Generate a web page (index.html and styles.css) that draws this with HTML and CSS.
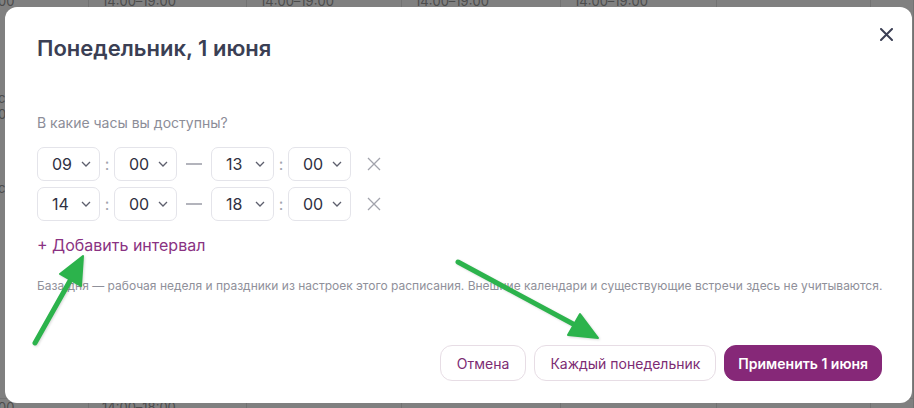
FILE: index.html
```html
<!DOCTYPE html>
<html lang="ru">
<head>
    <meta charset="UTF-8">
    <meta name="viewport" content="width=device-width, initial-scale=1.0">
    <title>Понедельник, 1 июня</title>
    <link rel="stylesheet" href="styles.css">
</head>
<body>
    <!-- schedule table behind the dimmed overlay -->
    <div class="backdrop">
        <div class="bg-cell first">00</div>
        <div class="bg-cell">14:00–19:00</div>
        <div class="bg-cell">14:00–19:00</div>
        <div class="bg-cell">14:00–19:00</div>
        <div class="bg-cell">14:00–19:00</div>
        <div class="bg-cell"></div>
        <div class="bg-cell"></div>

        <div class="bg-cell first">со<br>0</div>
        <div class="bg-cell"></div>
        <div class="bg-cell"></div>
        <div class="bg-cell"></div>
        <div class="bg-cell"></div>
        <div class="bg-cell"></div>
        <div class="bg-cell"></div>

        <div class="bg-cell first">со</div>
        <div class="bg-cell"></div>
        <div class="bg-cell"></div>
        <div class="bg-cell"></div>
        <div class="bg-cell"></div>
        <div class="bg-cell"></div>
        <div class="bg-cell"></div>

        <div class="bg-cell first">00</div>
        <div class="bg-cell">14:00–18:00</div>
        <div class="bg-cell"></div>
        <div class="bg-cell"></div>
        <div class="bg-cell"></div>
        <div class="bg-cell"></div>
        <div class="bg-cell"></div>
    </div>

    <div class="modal">
        <button class="close-btn" aria-label="Закрыть">
            <svg width="13" height="13" viewBox="0 0 13 13">
                <path d="M1 1L12 12M12 1L1 12" stroke="currentColor" stroke-width="2" stroke-linecap="round"/>
            </svg>
        </button>

        <h2 class="title">Понедельник, 1 июня</h2>

        <p class="question">В какие часы вы доступны?</p>

        <div class="intervals">
            <div class="interval">
                <div class="select"><span>09</span><svg class="chev" width="10" height="6" viewBox="0 0 10 6"><path d="M1 1L5 5L9 1" fill="none" stroke="currentColor" stroke-width="1.3"/></svg></div>
                <span class="colon">:</span>
                <div class="select"><span>00</span><svg class="chev" width="10" height="6" viewBox="0 0 10 6"><path d="M1 1L5 5L9 1" fill="none" stroke="currentColor" stroke-width="1.3"/></svg></div>
                <span class="dash"></span>
                <div class="select"><span>13</span><svg class="chev" width="10" height="6" viewBox="0 0 10 6"><path d="M1 1L5 5L9 1" fill="none" stroke="currentColor" stroke-width="1.3"/></svg></div>
                <span class="colon">:</span>
                <div class="select"><span>00</span><svg class="chev" width="10" height="6" viewBox="0 0 10 6"><path d="M1 1L5 5L9 1" fill="none" stroke="currentColor" stroke-width="1.3"/></svg></div>
                <button class="remove-btn" aria-label="Удалить">
                    <svg width="14" height="14" viewBox="0 0 14 14"><path d="M1 1L13 13M13 1L1 13" stroke="currentColor" stroke-width="1.3"/></svg>
                </button>
            </div>
            <div class="interval">
                <div class="select"><span>14</span><svg class="chev" width="10" height="6" viewBox="0 0 10 6"><path d="M1 1L5 5L9 1" fill="none" stroke="currentColor" stroke-width="1.3"/></svg></div>
                <span class="colon">:</span>
                <div class="select"><span>00</span><svg class="chev" width="10" height="6" viewBox="0 0 10 6"><path d="M1 1L5 5L9 1" fill="none" stroke="currentColor" stroke-width="1.3"/></svg></div>
                <span class="dash"></span>
                <div class="select"><span>18</span><svg class="chev" width="10" height="6" viewBox="0 0 10 6"><path d="M1 1L5 5L9 1" fill="none" stroke="currentColor" stroke-width="1.3"/></svg></div>
                <span class="colon">:</span>
                <div class="select"><span>00</span><svg class="chev" width="10" height="6" viewBox="0 0 10 6"><path d="M1 1L5 5L9 1" fill="none" stroke="currentColor" stroke-width="1.3"/></svg></div>
                <button class="remove-btn" aria-label="Удалить">
                    <svg width="14" height="14" viewBox="0 0 14 14"><path d="M1 1L13 13M13 1L1 13" stroke="currentColor" stroke-width="1.3"/></svg>
                </button>
            </div>
        </div>

        <a class="add-link">+ Добавить интервал</a>

        <p class="info">База дня — рабочая неделя и праздники из настроек этого расписания. Внешние календари и существующие встречи здесь не учитываются.</p>

        <div class="footer">
            <button class="btn cancel">Отмена</button>
            <button class="btn">Каждый понедельник</button>
            <button class="btn primary">Применить 1 июня</button>
        </div>
    </div>

    <!-- annotation arrows -->
    <svg class="arrows" width="914" height="408" viewBox="0 0 914 408">
        <g fill="#2cb34c" stroke="#2cb34c">
            <line x1="35" y1="343" x2="71" y2="279" stroke-width="5" stroke-linecap="round"/>
            <polygon points="83,256 60,274 81,286" stroke-width="2" stroke-linejoin="round"/>
            <line x1="458" y1="262" x2="575" y2="325" stroke-width="5" stroke-linecap="round"/>
            <polygon points="598,338 580,314 568,335" stroke-width="2" stroke-linejoin="round"/>
        </g>
    </svg>
</body>
</html>
```

FILE: styles.css
```css
* {
    margin: 0;
    padding: 0;
    box-sizing: border-box;
}

body {
    width: 914px;
    height: 408px;
    background: #808080;
    font-family: Inter, "Noto Sans", sans-serif;
    overflow: hidden;
    position: relative;
}

/* dimmed table behind */
.backdrop {
    display: grid;
    grid-template-columns: 89px 158px 155px 159px 156px 154px 1fr;
    grid-template-rows: 95px 92px 218px 10px;
    margin-top: -7px;
    color: #4c4c4c;
    font-size: 13px;
    line-height: 16px;
}

.bg-cell {
    border-right: 1px solid #727272;
    padding-left: 13px;
    white-space: nowrap;
    overflow: hidden;
}

.bg-cell.first {
    padding-left: 0;
    margin-left: -2px;
}

.backdrop .bg-cell:nth-child(n+8):nth-child(-n+14) {
    padding-top: 2px;
}

.backdrop .bg-cell:nth-child(n+22) {
    border-top: 1px solid #747474;
}

/* modal */
.modal {
    position: absolute;
    top: 7px;
    left: 5px;
    width: 907px;
    height: 396px;
    background: #ffffff;
    border-radius: 12px;
    padding: 27px 30px 22px 32px;
    display: flex;
    flex-direction: column;
    align-items: flex-start;
}

.close-btn {
    position: absolute;
    top: 21px;
    right: 19px;
    width: 13px;
    height: 13px;
    border: none;
    background: none;
    color: #3b3f54;
    display: flex;
    cursor: pointer;
}

.title {
    font-size: 22px;
    line-height: 28px;
    font-weight: 600;
    color: #3b3f54;
}

.question {
    margin-top: 52px;
    font-size: 14px;
    line-height: 18px;
    color: #8c8d98;
}

.intervals {
    margin-top: 15px;
    display: flex;
    flex-direction: column;
    gap: 6px;
}

.interval {
    display: flex;
    align-items: center;
    gap: 6px;
}

.select {
    width: 63px;
    height: 34px;
    border: 1px solid #e4e4ea;
    border-radius: 7px;
    padding: 0 8px 0 14px;
    display: flex;
    align-items: center;
    justify-content: space-between;
    font-size: 16px;
    color: #2f3142;
}

.chev {
    color: #5d5f6d;
}

.colon {
    width: 2px;
    display: flex;
    justify-content: center;
    font-size: 16px;
    color: #a3a4ae;
}

.dash {
    width: 22px;
    height: 1.5px;
    border-left: 3px solid transparent;
    border-right: 3px solid transparent;
    background: #b3b4bc;
    background-clip: content-box;
}

.remove-btn {
    margin-left: 10px;
    width: 14px;
    height: 14px;
    border: none;
    background: none;
    color: #a2a3ac;
    display: flex;
    cursor: pointer;
}

.add-link {
    margin-top: 13px;
    font-size: 16px;
    line-height: 22px;
    color: #8a3282;
    cursor: pointer;
}

.info {
    margin-top: 22px;
    font-size: 12px;
    line-height: 16px;
    color: #8f909a;
    white-space: nowrap;
}

.footer {
    margin-top: auto;
    align-self: flex-end;
    display: flex;
    gap: 8px;
}

.btn {
    height: 36px;
    padding: 0 15px;
    border: 1px solid #e7dde5;
    border-radius: 12px;
    background: #ffffff;
    font-family: inherit;
    font-size: 14px;
    color: #7d2c73;
    cursor: pointer;
}

.btn.cancel {
    padding: 0 16px;
}

.btn.primary {
    padding: 0 13px;
    background: #862878;
    border-color: #862878;
    color: #ffffff;
    font-weight: 600;
}

.arrows {
    position: absolute;
    top: 0;
    left: 0;
    pointer-events: none;
    filter: drop-shadow(1px 1px 1px rgba(0, 0, 0, 0.15));
}
```
